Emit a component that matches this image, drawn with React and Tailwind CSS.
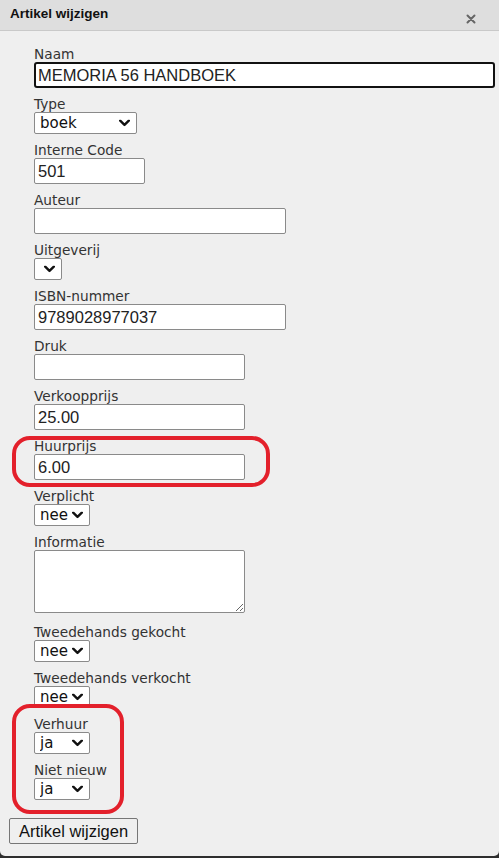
import React from 'react';

const FIELDS = [
    { label: 'Naam', kind: 'input', w: 461, value: 'MEMORIA 56 HANDBOEK', focused: true },
    { label: 'Type', kind: 'select', w: 103, value: 'boek' },
    { label: 'Interne Code', kind: 'input', w: 111, value: '501' },
    { label: 'Auteur', kind: 'input', w: 252, value: '' },
    { label: 'Uitgeverij', kind: 'select', w: 28, value: '' },
    { label: 'ISBN-nummer', kind: 'input', w: 252, value: '9789028977037' },
    { label: 'Druk', kind: 'input', w: 211, value: '' },
    { label: 'Verkoopprijs', kind: 'input', w: 211, value: '25.00' },
    { label: 'Huurprijs', kind: 'input', w: 211, value: '6.00' },
    { label: 'Verplicht', kind: 'select', w: 56, value: 'nee' },
    { label: 'Informatie', kind: 'textarea', w: 211, value: '' },
    { label: 'Tweedehands gekocht', kind: 'select', w: 56, value: 'nee' },
    { label: 'Tweedehands verkocht', kind: 'select', w: 56, value: 'nee' },
    { label: 'Verhuur', kind: 'select', w: 56, value: 'ja' },
    { label: 'Niet nieuw', kind: 'select', w: 56, value: 'ja' },
];

const Chevron = () => (
    <svg width="11" height="7" viewBox="0 0 11 7" className="absolute right-[7px] top-1/2 -translate-y-1/2 pointer-events-none">
        <path d="M1.2 1.2 L5.5 5.4 L9.8 1.2" fill="none" stroke="#111" strokeWidth="2.4" strokeLinecap="round" strokeLinejoin="round" />
    </svg>
);

const Field = ({ field }) => {
    const { label, kind, w, value, focused } = field;
    return (
        <div className="flex flex-col items-start">
            <label className="block h-4 leading-4 text-[13.7px] text-[#333] font-['DejaVu_Sans',sans-serif]">{label}</label>
            {kind === 'input' && (
                <input
                    type="text"
                    defaultValue={value}
                    style={{ width: w }}
                    className={`block h-[26px] mb-2 px-[2px] bg-white text-[16.5px] text-[#222] font-['Liberation_Sans',Arial,sans-serif] outline-none ${focused
                        ? 'border-2 border-[#111] rounded-[3px]'
                        : 'border border-[#8a8a8a] rounded-[2px] pl-[3px]'
                        }`}
                />
            )}
            {kind === 'select' && (
                <div className="relative mb-2 h-[22px]" style={{ width: w }}>
                    <select
                        defaultValue={value}
                        className="block w-full h-[22px] appearance-none bg-white border border-[#8a8a8a] rounded-[2px] pl-[5px] text-[15px] leading-[20px] text-[#111] font-['DejaVu_Sans',sans-serif] outline-none"
                    >
                        <option value={value}>{value}</option>
                    </select>
                    <Chevron />
                </div>
            )}
            {kind === 'textarea' && (
                <textarea
                    defaultValue={value}
                    style={{ width: w }}
                    className="block h-[63px] mb-[11px] bg-white border border-[#8a8a8a] rounded-[2px] outline-none"
                />
            )}
        </div>
    );
};

export default function App() {
    return (
        <div className="w-[499px] h-[858px] bg-[#2e2e2e] overflow-hidden">
            <div className="w-full h-[856px] bg-[#efefef] rounded-b-[5px] flex flex-col">
                {/* Header */}
                <div className="h-[31px] shrink-0 flex items-center justify-between pl-[10px] pr-[23px] bg-[#dedede] border-b border-[#c9c9c9]">
                    <h2 className="text-[13.5px] font-bold text-[#111] font-['Liberation_Sans',Arial,sans-serif] -mt-[1px]">Artikel wijzigen</h2>
                    <svg width="10" height="10" viewBox="0 0 10 10" className="mt-[7px]">
                        <path d="M1.5 1.5 L8.5 8.5 M8.5 1.5 L1.5 8.5" stroke="#666" strokeWidth="2" strokeLinecap="round" />
                    </svg>
                </div>

                {/* Body */}
                <div className="relative flex-1 pt-[15px] pl-[9px]">
                    <div className="pl-[25px]">
                        {FIELDS.map((f) => <Field key={f.label} field={f} />)}
                    </div>
                    <button
                        type="button"
                        className="block mt-[10px] h-[26px] px-[9px] bg-[#efefef] border border-[#767676] rounded-[2px] text-[16.5px] leading-[24px] text-[#111] font-['Liberation_Sans',Arial,sans-serif]"
                    >
                        Artikel wijzigen
                    </button>

                    {/* Annotation marks */}
                    <div className="absolute left-[12px] top-[405px] w-[258px] h-[51px] border-[4px] border-[#e3202b] rounded-[18px] pointer-events-none" />
                    <div className="absolute left-[12px] top-[673px] w-[112px] h-[110px] border-[4px] border-[#e3202b] rounded-[18px] pointer-events-none" />
                </div>
            </div>
        </div>
    );
}
